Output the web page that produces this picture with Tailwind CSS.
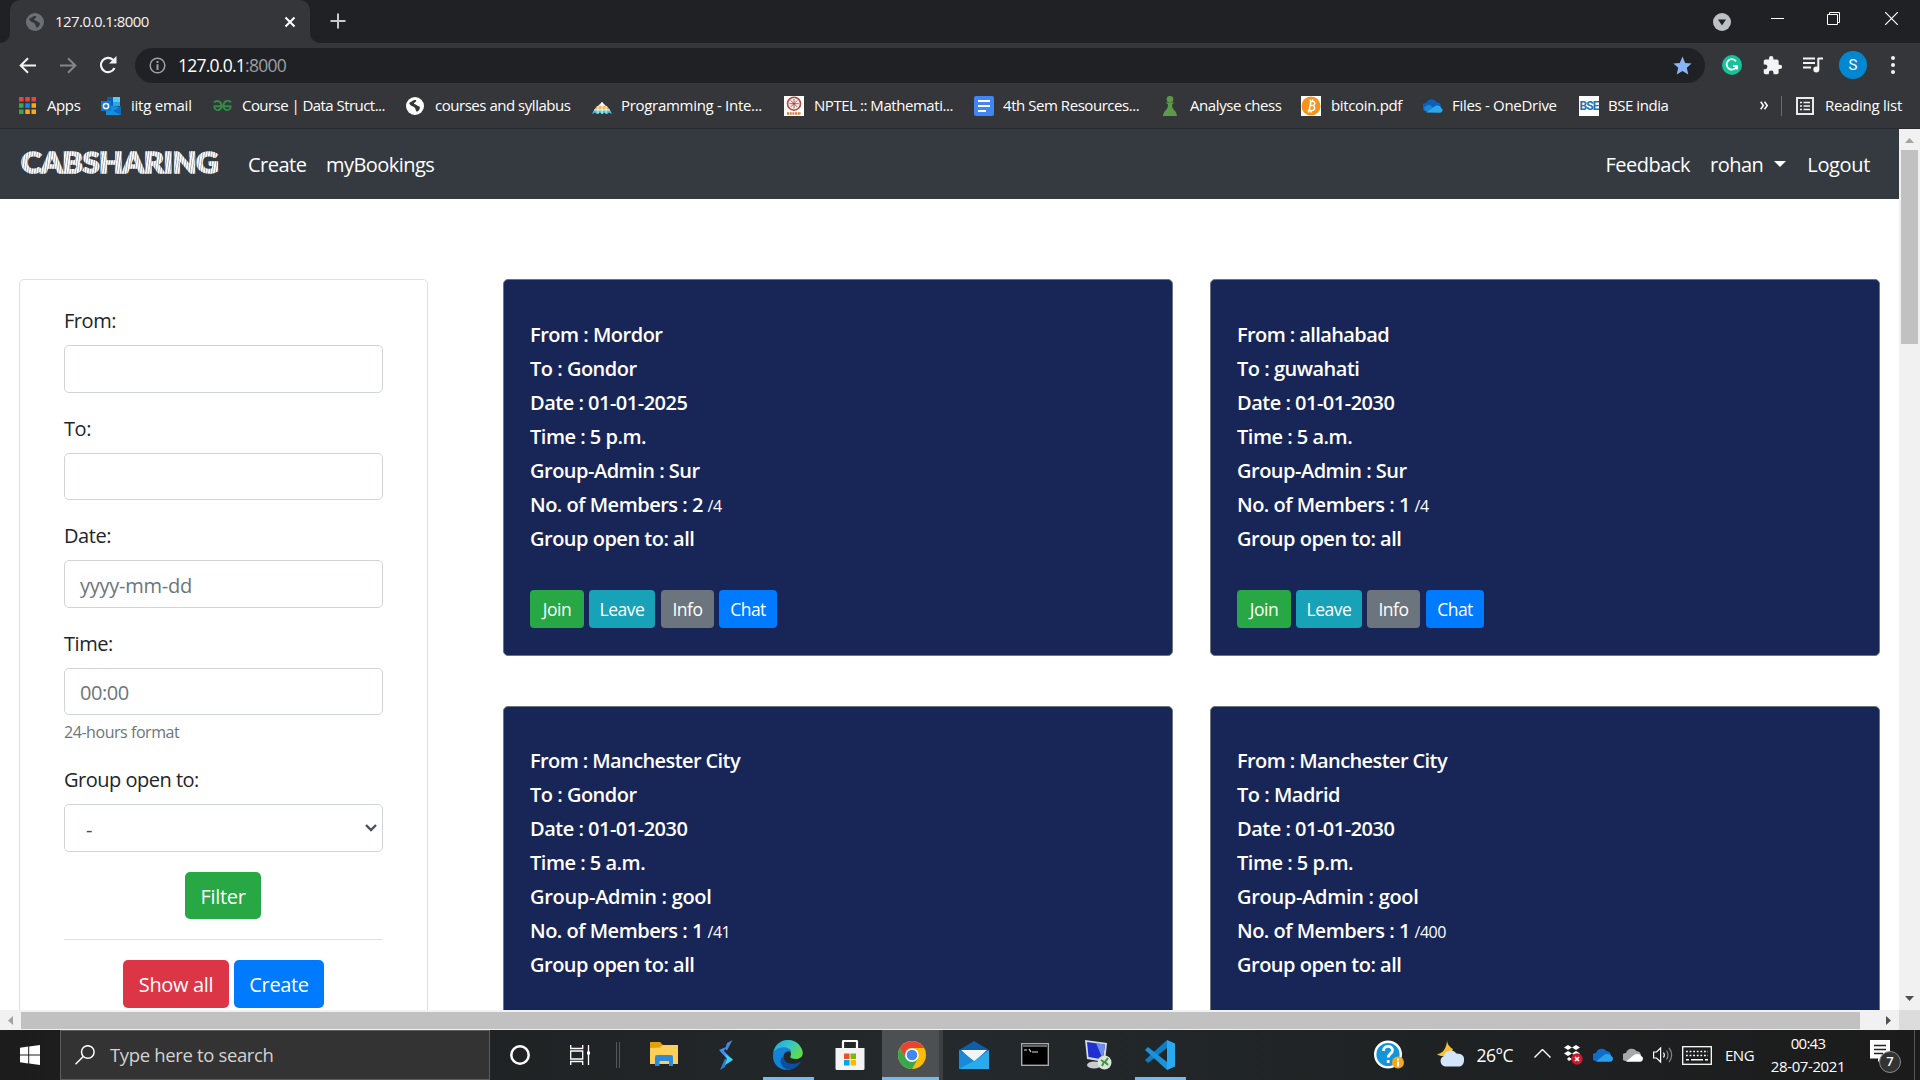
<!DOCTYPE html>
<html lang="en">
<head>
<meta charset="utf-8">
<title>127.0.0.1:8000</title>
<script src="https://cdn.jsdelivr.net/npm/@tailwindcss/browser@4"></script>
</head>
<body class="h-[1080px] w-[1920px] overflow-hidden bg-white font-['Open_Sans',sans-serif]">
<div class="flex h-[1080px] w-[1920px] flex-col">

<!-- Tab strip -->
<div class="flex h-[43px] shrink-0 bg-[#202124] text-[#f1f3f4]">
  <div class="flex h-full w-[10px] items-end bg-[#35363a]"><div class="h-full w-full rounded-br-[10px] bg-[#202124]"></div></div>
  <div class="flex h-full w-[300px] items-center rounded-t-[10px] bg-[#35363a] pl-4 pr-[12px]">
    <svg class="size-[18px]" viewBox="0 0 18 18"><circle cx="9" cy="9" r="9" fill="#6c6f73"/><path d="M3 6c3-1 3-3 7-3 1 2-2 2-2 4 2 0 2 1 4 2 3 0 2 4 0 5-2 2-2-1-3-3-1-2-4-1-6-5z" fill="#35363a"/></svg>
    <span class="ml-[11px] text-[15px] tracking-[-0.55px]">127.0.0.1:8000</span>
    <svg class="ml-auto size-4" viewBox="0 0 16 16" stroke="#fff" stroke-width="2"><path d="M3.500 3.500l9 9M12.500 3.500l-9 9"/></svg>
  </div>
  <div class="h-full w-[10px] bg-[#35363a]"><div class="h-full w-full rounded-bl-[10px] bg-[#202124]"></div></div>
  <svg class="ml-[10px] mt-[13px] size-4" viewBox="0 0 16 16" stroke="#c8c9cc" stroke-width="2"><path d="M8 .5v15M.5 8h15"/></svg>
  <div class="ml-auto flex">
    <svg class="mr-10 mt-[13px] size-[18px]" viewBox="0 0 18 18"><circle cx="9" cy="9" r="9" fill="#bdc1c6"/><path d="M5 6.500h8L9 12.500z" fill="#202124"/></svg>
    <svg class="mt-[12px] mr-[43px] h-[13px] w-[13px]" viewBox="0 0 13 13"><path d="M0 6.500h13" stroke="#fff"/></svg>
    <svg class="mr-[45px] mt-[12px] h-[13px] w-[13px]" viewBox="0 0 13 13" fill="none" stroke="#fff"><path d="M.5 2.500h10v10H.5zM2.500 2.500v-2h10v10h-2"/></svg>
    <svg class="mr-[22px] mt-[12px] h-[13px] w-[13px]" viewBox="0 0 13 13" stroke="#fff" stroke-width="1.200"><path d="M0 0l13 13M13 0L0 13"/></svg>
  </div>
</div>

<!-- Toolbar -->
<div class="flex h-[45px] shrink-0 items-center bg-[#35363a] pb-px pl-[19px] text-[#f1f3f4]">
  <svg class="size-[17px]" viewBox="0 0 17 17" fill="none" stroke="#f1f3f4" stroke-width="2"><path d="M17 8.500H2M9 1.200L1.700 8.500 9 15.800"/></svg>
  <svg class="ml-6 size-[17px]" viewBox="0 0 17 17" fill="none" stroke="#85868a" stroke-width="2"><path d="M0 8.500h15M8 1.200l7.300 7.300L8 15.800"/></svg>
  <svg class="ml-[22px] size-[18px]" viewBox="0 0 18 18"><path d="M15.500 12A7.100 7.100 0 1 1 14 3.900" fill="none" stroke="#f1f3f4" stroke-width="2.200"/><path d="M17.500 0v7.500H10z" fill="#f1f3f4"/></svg>
  <div class="ml-[18px] flex h-[35px] w-[1570px] items-center rounded-full bg-[#202124] pl-3.5 pr-[13px]">
    <svg class="size-[17px]" viewBox="0 0 17 17"><circle cx="8.500" cy="8.500" r="7.300" fill="none" stroke="#9aa0a6" stroke-width="1.500"/><path d="M8.500 4v2M8.500 7.300V13" stroke="#9aa0a6" stroke-width="2"/></svg>
    <span class="ml-3 text-[17.500px] tracking-[-0.75px] text-white">127.0.0.1<span class="text-[#9aa0a6]">:8000</span></span>
    <svg class="ml-auto size-[19px]" viewBox="0 0 24 24" fill="#8ab4f8"><path d="M12 .5l3.400 8.200 8.100.7-6.100 5.500 1.900 8.400L12 18.800l-7.300 4.500 1.900-8.400L.5 9.400l8.100-.7z"/></svg>
  </div>
  <svg class="ml-[17px] size-5" viewBox="0 0 20 20"><circle cx="10" cy="10" r="10" fill="#15c39a"/><path d="M14 6.200A5.200 5.200 0 1 0 14.800 11h-3.600M15 14.500V11" fill="none" stroke="#fff" stroke-width="1.800"/></svg>
  <svg class="ml-5 size-[21px]" viewBox="0 0 24 24" fill="#f1f3f4"><path d="M20.500 11H19V7c0-1.100-.9-2-2-2h-4V3.500a2.500 2.500 0 0 0-5 0V5H4c-1.100 0-2 .9-2 2v3.800h1.500a2.700 2.700 0 0 1 0 5.400H2V20c0 1.100.9 2 2 2h3.800v-1.500a2.700 2.700 0 0 1 5.400 0V22H17c1.100 0 2-.9 2-2v-4h1.500a2.500 2.500 0 0 0 0-5z"/></svg>
  <svg class="ml-5 h-4 w-5" viewBox="0 0 20 16"><path d="M0 1.500h12M0 6h12M0 10.500h8" stroke="#f1f3f4" stroke-width="2"/><path d="M15 1.500h5M15.300 1v11" stroke="#f1f3f4" stroke-width="2"/><circle cx="13.300" cy="12.500" r="3" fill="#f1f3f4"/></svg>
  <div class="ml-4 flex size-7 items-center justify-center rounded-full bg-[#0288d1] font-['Roboto',sans-serif] text-[15px] text-white">S</div>
  <svg class="ml-6 h-[18px] w-1" viewBox="0 0 4 18" fill="#f1f3f4"><circle cx="2" cy="2" r="2"/><circle cx="2" cy="9" r="2"/><circle cx="2" cy="16" r="2"/></svg>
</div>

<!-- Bookmarks bar -->
<div class="flex h-[41px] shrink-0 border-b border-[#292a2d] bg-[#35363a] text-[15px] text-white">
 <div class="flex h-[35px] w-full items-center whitespace-nowrap">
  <div class="flex w-[81px] items-center pl-[19px]">
    <svg class="size-[17px] shrink-0" viewBox="0 0 17 17"><path d="M0 0h4.500v4.500H0zM6.300 0h4.500v4.500H6.300zM12.500 0H17v4.500h-4.500z" fill="#e8453c"/><path d="M0 6.300h4.500v4.500H0zM0 12.500h4.500V17H0z" fill="#34a853"/><path d="M6.300 6.300h4.500v4.500H6.300z" fill="#1a84f0"/><path d="M12.500 6.300H17v4.500h-4.500zM6.300 12.500h4.500V17H6.300zM12.500 12.500H17V17h-4.500z" fill="#fbab12"/></svg>
    <span class="ml-[11px] tracking-[-0.4px]">Apps</span>
  </div>
  <div class="ml-5 flex w-[92px] items-center">
    <svg class="h-[20px] w-5 shrink-0" viewBox="0 0 20 18"><path d="M6 0h13v9H6z" fill="#28a8ea"/><path d="M6 0h6v9H6z" fill="#0a5fb4"/><path d="M12 0h7v5h-7z" fill="#50d0ff"/><path d="M5 8l15 2v8H5z" fill="#1490df"/><path d="M12 14l8-5v9z" fill="#0f6cbd"/><path d="M0 4h10v10H0z" fill="#0f78d4"/><circle cx="5" cy="9" r="2.600" fill="none" stroke="#fff" stroke-width="1.500"/></svg>
    <span class="ml-[10px] tracking-[-0.25px]">iitg email</span>
  </div>
  <div class="ml-5 flex w-[173px] items-center">
    <svg class="h-3 w-[19px] shrink-0" viewBox="0 0 19 12" fill="none" stroke="#2f8d46" stroke-width="1.900"><path d="M1 2.500C4-.5 8.500 1.500 8.500 6S3 11.500 1.500 8V6.200h16V8C16 11.500 10.500 10.500 10.500 6s4.500-7.500 7.500-3.500"/></svg>
    <span class="ml-2.5 tracking-[-0.55px]">Course | Data Struct...</span>
  </div>
  <div class="ml-5 flex w-[166px] items-center">
    <svg class="size-[18px] shrink-0" viewBox="0 0 18 18"><circle cx="9" cy="9" r="9" fill="#fff"/><path d="M3 6c3-1 3-3 7-3 1 2-2 2-2 4 2 0 2 1 4 2 3 0 2 4 0 5-2 2-2-1-3-3-1-2-4-1-6-5z" fill="#35363a"/></svg>
    <span class="ml-[11px] tracking-[-0.47px]">courses and syllabus</span>
  </div>
  <div class="ml-5 flex w-[171px] items-center">
    <svg class="mt-1 h-3 w-5 shrink-0" viewBox="0 0 20 12"><path d="M10 0l4 4H6z" fill="#e8f4f8"/><path d="M5 4h10l3 4H2z" fill="#f5b760"/><path d="M2 8h16l2 4-3-1.500-2 1.500-2-1.500-3 1.500-2-1.500-3 1.500-2-1.500L0 12z" fill="#4fc4d6"/><path d="M10 0v12M6 4v8M14 4v8M2 8h16" stroke="#fff" stroke-width=".8"/></svg>
    <span class="ml-[9px] tracking-[-0.3px]">Programming - Inte...</span>
  </div>
  <div class="ml-[21px] flex w-[170px] items-center">
    <svg class="size-5 shrink-0" viewBox="0 0 20 20"><path d="M0 0h20v20H0z" fill="#fff"/><circle cx="10" cy="7.700" r="6.500" fill="#fbeee4" stroke="#b5453c" stroke-width="1.600"/><path d="M10 3v9.500M5.300 7.700h9.500M6.700 4.400l6.600 6.600M13.300 4.400L6.700 11" stroke="#8d3a4e" stroke-width=".8"/><path d="M3 17.500h14" stroke="#d07b34" stroke-width="2.400" stroke-dasharray="2 .7"/></svg>
    <span class="ml-[10px] tracking-[-0.45px]">NPTEL :: Mathemati...</span>
  </div>
  <div class="ml-5 flex w-[166px] items-center">
    <svg class="size-5 shrink-0" viewBox="0 0 20 20"><rect width="20" height="20" rx="2" fill="#4285f4"/><path d="M4 5h12M4 10h12M4 15h8" stroke="#fff" stroke-width="2.200"/></svg>
    <span class="ml-[9px] tracking-[-0.45px]">4th Sem Resources...</span>
  </div>
  <div class="ml-[23px] flex w-[118px] items-center">
    <svg class="h-5 w-[14px] shrink-0" viewBox="0 0 14 20" fill="#5d9948"><circle cx="7" cy="3.300" r="3.300"/><path d="M2.500 6.500h9L9 8.500c0 3 1 4.500 3 6.500 1.500 1.500 2 5 2 5H0s.5-3.500 2-5c2-2 3-3.500 3-6.500z"/></svg>
    <span class="ml-[13px] tracking-[-0.42px]">Analyse chess</span>
  </div>
  <div class="ml-5 flex w-[102px] items-center">
    <svg class="size-5 shrink-0" viewBox="0 0 20 20"><path d="M0 0h20v20H0z" fill="#fff"/><circle cx="10" cy="10" r="9.500" fill="#f7931a"/><path d="M8.200 14.500l1.700-9h2c2.700.2 2.200 3.900 0 4.100H9.100h2.700c2.700.3 2.200 4.800-.7 4.900H6.700M9.500 3.500l-.4 2M11.800 3.500l-.4 2M8 14.500l-.3 2M10.300 14.500l-.3 2" fill="none" stroke="#fff" stroke-width="1.500"/></svg>
    <span class="ml-[10px] tracking-[-0.35px]">bitcoin.pdf</span>
  </div>
  <div class="ml-5 flex w-[135px] items-center">
    <svg class="h-[14px] w-5 shrink-0" viewBox="0 0 20 14"><path d="M3 12a4 4 0 0 1 0-8A6 6 0 0 1 13.500 3 5 5 0 0 1 18 7.500L8 13z" fill="#0f5fb8"/><path d="M8 13L3 12.500C0 11 1 7 4 6.500c2-1 4 0 5 1l3 3z" fill="#1686d9"/><path d="M3 13.500L11 8c3-3 7-1 7 1 2 .5 2.500 4.500-1 4.800z" fill="#2aa8ee"/></svg>
    <span class="ml-[9px] tracking-[-0.3px]">Files - OneDrive</span>
  </div>
  <div class="ml-[21px] flex items-center">
    <div class="flex size-5 shrink-0 items-center justify-center overflow-hidden bg-white font-['Roboto',sans-serif] text-[12px] font-bold tracking-[-1px] text-[#1d74b8]">BSE</div>
    <span class="ml-[9px] tracking-[-0.45px]">BSE india</span>
  </div>
  <div class="ml-auto flex items-center">
    <svg class="h-[9px] w-2" viewBox="0 0 8 9" fill="none" stroke="#fff" stroke-width="1.500"><path d="M.7.7l2.700 3.800L.7 8.300M4.500.7l2.700 3.800-2.700 3.800"/></svg>
    <div class="ml-[13px] h-5 w-px bg-[#6b6c70]"></div>
    <svg class="ml-[14px] size-[18px]" viewBox="0 0 18 18" fill="none" stroke="#f1f3f4"><rect x="1" y="1" width="16" height="16" stroke-width="1.900"/><path d="M4 5.500h2M4 9h2M4 12.500h2M7.500 5.500H14M7.500 9H14M7.500 12.500H14" stroke-width="1.500"/></svg>
    <span class="ml-[11px] mr-[18px] tracking-[-0.27px]">Reading list</span>
  </div>
 </div>
</div>

<!-- Viewport -->
<div class="flex h-[881px] shrink-0">
<main class="flex h-full w-[1899px] flex-col overflow-hidden">
  <nav class="flex h-[70px] shrink-0 items-center bg-[#343a40] px-5 pt-0.5 text-[20px] tracking-[-0.5px] text-white">
    <svg class="mb-1 h-[34px] w-[228px]" viewBox="0 0 228 34">
      <defs><pattern id="inline" width="2.500" height="2.500" patternUnits="userSpaceOnUse" patternTransform="rotate(8)"><path d="M0 0h2.500v2.500H0z" fill="#a3a8ae"/><path d="M0 0h1.600v2.500H0z" fill="#fff"/></pattern></defs>
      <text x="1" y="27" font-family="Lato, sans-serif" font-weight="900" font-size="28" textLength="197" lengthAdjust="spacingAndGlyphs" fill="url(#inline)" stroke="url(#inline)" stroke-width="1.600">CABSHARING</text>
    </svg>
    <a class="w-[78px]">Create</a>
    <a class="tracking-[-0.55px]">myBookings</a>
    <a class="ml-auto">Feedback</a>
    <a class="ml-5 flex items-center">rohan
      <svg class="mb-0.5 ml-[11px] h-[6px] w-3" viewBox="0 0 12 6"><path d="M0 0h12L6 6z" fill="#fff"/></svg></a>
    <a class="ml-[21px] mr-[9px] tracking-[-0.35px]">Logout</a>
  </nav>
  <div class="flex min-h-0 flex-1 pl-[19px] pt-20">
    <aside class="h-[800px] w-[409px] shrink-0 rounded-[5px] border border-[#dfdfdf] px-11 pt-[25px] text-[20px] tracking-[-0.45px] text-[#212529]">
      <div class="mb-5"><label class="mb-2.5 block h-[30px] leading-8">From:</label><div class="h-[47.5px] rounded-[5px] border border-[#ced4da]"></div></div>
      <div class="mb-5"><label class="mb-2.5 block h-[30px] leading-8">To:</label><div class="h-[47.5px] rounded-[5px] border border-[#ced4da]"></div></div>
      <div class="mb-5"><label class="mb-2.5 block h-[30px] leading-8">Date:</label><div class="flex h-[47.5px] items-center rounded-[5px] border border-[#ced4da] px-[15px] pt-1 tracking-[-0.25px] text-[#6c757d]">yyyy-mm-dd</div></div>
      <div class="mb-5"><label class="mb-2.5 block h-[30px] leading-8">Time:</label><div class="flex h-[47.5px] items-center rounded-[5px] border border-[#ced4da] px-[15px] pt-1 text-[#6c757d]">00:00</div>
      <small class="mt-[5px] block h-[24px] text-[16px] leading-[25px] text-[#6c757d]">24-hours format</small></div>
      <div><label class="mb-2.5 block h-[30px] leading-8 tracking-[-0.5px]">Group open to:</label>
        <div class="flex h-[47.5px] items-center justify-between rounded-[5px] border border-[#ced4da] pl-[21px] pr-[5px] text-[#495057]"><span class="pt-1">-</span><svg class="h-2 w-3" viewBox="0 0 12 8" fill="none" stroke="#495057" stroke-width="2.400"><path d="M1 1l5 5 5-5"/></svg></div></div>
      <div class="mt-5 flex justify-center"><div class="mr-px flex h-[47.5px] w-[76px] items-center justify-center rounded-[5px] bg-[#28a745] pt-[3px] tracking-[-0.3px] text-white">Filter</div></div>
      <div class="my-5 h-px bg-[#e0e0e0]"></div>
      <div class="flex justify-center gap-[5px] tracking-[-0.35px] text-white"><div class="flex h-[47.5px] w-[106px] items-center justify-center rounded-[5px] bg-[#dc3545] pt-0.5">Show all</div><div class="flex h-[47.5px] w-[90px] items-center justify-center rounded-[5px] bg-[#007bff] pt-0.5">Create</div></div>
    </aside>

    <section class="ml-[75px] grid h-[803px] grid-cols-[670px_670px] grid-rows-[377px_377px] gap-x-[37px] gap-y-[49.5px] text-[20px] font-semibold leading-[34px] tracking-[-0.5px] text-white">
      <article class="rounded-[5px] border border-[#6c757d] bg-[#182657] pl-[26px] pt-[38px]">
        <p>From : Mordor</p><p>To : Gondor</p><p>Date : 01-01-2025</p><p>Time : 5 p.m.</p><p>Group-Admin : Sur</p><p>No. of Members : 2 <small class="text-[16px] font-normal leading-none">/4</small></p><p>Group open to: all</p>
        <div class="mt-[34px] flex gap-[5px] text-[17.5px] font-normal leading-[38px]"><span class="w-[54px] rounded bg-[#28a745] text-center">Join</span><span class="w-[66px] rounded bg-[#17a2b8] text-center">Leave</span><span class="ml-px w-[53px] rounded bg-[#6c757d] text-center">Info</span><span class="w-[58px] rounded bg-[#007bff] text-center">Chat</span></div>
      </article>
      <article class="rounded-[5px] border border-[#6c757d] bg-[#182657] pl-[26px] pt-[38px]">
        <p class="tracking-[-0.6px]">From : allahabad</p><p>To : guwahati</p><p>Date : 01-01-2030</p><p>Time : 5 a.m.</p><p>Group-Admin : Sur</p><p>No. of Members : 1 <small class="text-[16px] font-normal leading-none">/4</small></p><p>Group open to: all</p>
        <div class="mt-[34px] flex gap-[5px] text-[17.5px] font-normal leading-[38px]"><span class="w-[54px] rounded bg-[#28a745] text-center">Join</span><span class="w-[66px] rounded bg-[#17a2b8] text-center">Leave</span><span class="w-[53px] rounded bg-[#6c757d] text-center">Info</span><span class="ml-px w-[58px] rounded bg-[#007bff] text-center">Chat</span></div>
      </article>
      <article class="rounded-[5px] border border-[#6c757d] bg-[#182657] pl-[26px] pt-[37.5px]">
        <p class="tracking-[-0.6px]">From : Manchester City</p><p>To : Gondor</p><p>Date : 01-01-2030</p><p>Time : 5 a.m.</p><p class="tracking-[-0.3px]">Group-Admin : gool</p><p>No. of Members : 1 <small class="text-[16px] font-normal leading-none">/41</small></p><p>Group open to: all</p>
      </article>
      <article class="rounded-[5px] border border-[#6c757d] bg-[#182657] pl-[26px] pt-[37.5px]">
        <p class="tracking-[-0.6px]">From : Manchester City</p><p>To : Madrid</p><p>Date : 01-01-2030</p><p>Time : 5 p.m.</p><p class="tracking-[-0.3px]">Group-Admin : gool</p><p>No. of Members : 1 <small class="text-[16px] font-normal leading-none">/400</small></p><p>Group open to: all</p>
      </article>
    </section>
  </div>
</main>
<div class="flex w-[21px] flex-col items-center bg-[#f1f1f1]">
  <svg class="mt-[9px] h-[5px] w-[9px]" viewBox="0 0 9 5"><path d="M0 5h9L4.500 0z" fill="#a3a3a3"/></svg>
  <div class="mt-[7px] h-[194px] w-[17px] bg-[#c1c1c1]"></div>
  <svg class="mb-[9px] mt-auto h-[5px] w-[9px]" viewBox="0 0 9 5"><path d="M0 0h9L4.500 5z" fill="#505050"/></svg>
</div>
</div>
<div class="flex h-5 shrink-0 items-center bg-[#f1f1f1]">
  <svg class="ml-2 h-[9px] w-[5px]" viewBox="0 0 5 9"><path d="M5 0v9L0 4.500z" fill="#a3a3a3"/></svg>
  <div class="ml-2 h-[17px] w-[1839px] bg-[#c1c1c1]"></div>
  <svg class="ml-[26px] h-[9px] w-[5px]" viewBox="0 0 5 9"><path d="M0 0v9l5-4.500z" fill="#505050"/></svg>
  <div class="ml-auto h-5 w-[21px] bg-[#dcdcdc]"></div>
</div>

<!-- Taskbar -->
<div class="flex h-[50px] shrink-0 bg-linear-to-r from-[#1c1c1c] via-[#23292c] to-[#1b1b1b] text-white">
  <div class="flex w-[60px] items-center justify-center"><svg class="size-5" viewBox="0 0 20 20" fill="#fff"><path d="M0 2.800L8.200 1.600v7.900H0zM9.200 1.500L20 0v9.500H9.200zM0 10.500h8.200v7.900L0 17.200zM9.200 10.500H20V20L9.200 18.500z"/></svg></div>
  <div class="flex w-[430px] items-center border border-[#5c5c5c] bg-[#333] pl-[14px]">
    <svg class="size-5" viewBox="0 0 20 20" fill="none" stroke="#fff" stroke-width="1.500"><circle cx="12.800" cy="7" r="6.300"/><path d="M8.300 11.500L.5 19.300"/></svg>
    <span class="ml-[15px] text-[18.5px] tracking-[-0.35px] text-[#d2d2d2]">Type here to search</span>
  </div>
  <div class="flex w-[60px] items-center justify-center"><svg class="size-5" viewBox="0 0 20 20"><circle cx="10" cy="10" r="8.700" fill="none" stroke="#fff" stroke-width="2.500"/></svg></div>
  <div class="flex w-[60px] items-center justify-center"><svg class="h-5 w-[21px]" viewBox="0 0 21 20" fill="none" stroke="#fff" stroke-width="1.300"><path d="M.7 0v3.500h12V0M.7 20v-3.500h12V20M.7 6h12v8h-12zM18.500 0v20"/><path d="M17 6.500h3v3h-3z" fill="#fff" stroke="none"/></svg></div>
  <div class="flex w-[20px] items-center gap-[2px] pl-1.5"><div class="h-[26px] w-px bg-[#55585a]"></div><div class="h-[26px] w-px bg-[#55585a]"></div></div>
  <div class="ml-0.5 flex w-[63px] items-center justify-center"><svg class="mb-0.5 h-[24px] w-[28px]" viewBox="0 0 28 24"><path d="M0 0h10l3 3h15v4H0z" fill="#e3a008"/><path d="M0 6l10-.5 3-2.500h15v19H0z" fill="#fccf58"/><path d="M5 24v-9q0-2 2-2h14q2 0 2 2v9h-4v-5H9.500v5z" fill="#2f8bd8"/></svg></div>
  <div class="flex w-[62px] items-center justify-center"><svg class="h-[30px] w-4" viewBox="0 0 16 30"><path d="M14.500 0L9 3 7 9l2 1.500z" fill="#4a86d8"/><path d="M2 30l5-3 2-7-2-1.500z" fill="#2f7fd0"/><path d="M1 10l7-3-2 4 9 9-8 5 2-6z" fill="#3f8ff2"/><path d="M7 14l8 5.500L7 25l2-6z" fill="#38d6f6"/></svg></div>
  <div class="flex w-[62px] flex-col items-center"><svg class="mb-[7px] mt-[10px] size-[30px] shrink-0" viewBox="0 0 30 30"><defs><linearGradient id="edge" x1="0" y1="0" x2="1" y2=".6"><stop offset="0" stop-color="#1f9fe0"/><stop offset=".5" stop-color="#35c4c8"/><stop offset="1" stop-color="#5fdc4c"/></linearGradient></defs><path d="M.3 13C2-3 25-5 29.500 11c1.500 7-5 9-10.500 7.500-3-1-1-2-1-4.500 0-5-7-8-17.700-1z" fill="url(#edge)"/><path d="M.3 13C3 6 17 5 18.500 12c-3-2-8 0-8 5 0 6 5 10 10 11.500C10 33-2 26 .3 13z" fill="#1383d8"/><path d="M10.500 16c0 8 10 10 17.500 5.500-4 8-13 10-18 5.500-4-4-2.500-9 .5-11z" fill="#0c4f9c"/></svg><div class="h-[3px] w-[51px] bg-[#76b9ed]"></div></div>
  <div class="flex w-[61px] items-center justify-center"><svg class="size-[30px]" viewBox="0 0 30 30"><path d="M8 9V2q0-1.200 1.200-1.200h11.600Q22 .8 22 2v7" fill="none" stroke="#fff" stroke-width="2.200"/><path d="M.5 8h29v20.500q0 1.500-1.500 1.500H2Q.5 30 .5 28.500z" fill="#f3f3f3"/><path d="M9 13.500h5.500V19H9z" fill="#f25022"/><path d="M15.500 13.500H21V19h-5.500z" fill="#7fba00"/><path d="M9 20h5.500v5.500H9z" fill="#00a4ef"/><path d="M15.500 20H21v5.500h-5.500z" fill="#ffb900"/></svg></div>
  <div class="ml-0.5 flex w-[61px] flex-col items-center border-r-4 border-[#3b3f42] bg-[#4d5053]"><svg class="mb-[8px] ml-0.5 mt-[11px] size-[28px] shrink-0" viewBox="0 0 28 28"><circle cx="14" cy="14" r="14" fill="#fbbc05"/><path d="M1.900 7A14 14 0 0 1 26.100 7H14a7 7 0 0 0-6.100 10.500z" fill="#ea4335"/><path d="M1.900 7A14 14 0 0 0 14 28l6.100-10.500a7 7 0 0 1-12.200 0z" fill="#34a853"/><circle cx="14" cy="14" r="6.800" fill="#fff"/><circle cx="14" cy="14" r="5.300" fill="#4285f4"/></svg><div class="h-[3px] w-[57px] bg-[#76b9ed]"></div></div>
  <div class="flex w-[61px] items-center justify-center"><svg class="size-[30px]" viewBox="0 0 30 28"><path d="M0 9L15 0l15 9v5H0z" fill="#0f5ea8"/><path d="M2 9h26L15 21z" fill="#f4f4f4"/><path d="M0 9l15 11L30 9v19H0z" fill="#2ba9ea"/><path d="M0 28V9l15 11z" fill="#1b8ad6"/></svg></div>
  <div class="flex w-[62px] items-center justify-center pb-0.5"><svg class="h-[23px] w-[28px]" viewBox="0 0 28 23"><rect x=".7" y=".7" width="26.600" height="21.600" fill="#000" stroke="#aaa" stroke-width="1.400"/><path d="M2 3h24" stroke="#666" stroke-width="2"/><path d="M3 7h3M8 6l2 3M11 9h6" stroke="#ddd" stroke-width="1.200"/></svg></div>
  <div class="flex w-[63px] items-center justify-center"><svg class="size-[30px]" viewBox="0 0 30 30"><path d="M2 0l22 3-2 19L4 19z" fill="#d9dde2"/><path d="M4 2l18 2.500-2 15L5.500 17z" fill="#2030d0"/><path d="M13 3.300l9 1.200-2 15z" fill="#6d8df0"/><ellipse cx="11" cy="25" rx="7" ry="3.500" fill="#c8ccd0"/><circle cx="21.500" cy="22.500" r="7" fill="#dde3dd"/><path d="M18 20l3 2-2 4M25 18l-3 4 3 3" fill="none" stroke="#3a9a38" stroke-width="2"/></svg></div>
  <div class="flex w-[62px] flex-col items-center"><svg class="mb-[7px] mt-[10px] size-[30px] shrink-0" viewBox="0 0 30 30"><path d="M22 0l8 3.500v23L22 30z" fill="#29a9f2"/><path d="M0 20L22 0v8L3 23z" fill="#0f7cc4"/><path d="M0 10l3-3 19 15v8z" fill="#1c92da"/></svg><div class="h-[3px] w-[51px] bg-[#76b9ed]"></div></div>

  <div class="ml-auto flex items-center">
    <svg class="mr-[33px] size-[30px]" viewBox="0 0 30 30"><circle cx="14" cy="14.500" r="12.800" fill="#1296db" stroke="#fff" stroke-width="2.400"/><path d="M9.500 11c0-6 9-6 9-.8 0 3.400-4.300 3.400-4.300 7.300M14.200 20v3" fill="none" stroke="#fff" stroke-width="2.800"/><circle cx="24" cy="22.500" r="6" fill="#f5a81c"/><path d="M24 18.500v2M24 21.500v5" stroke="#fff" stroke-width="2"/></svg>
    <svg class="mb-1 h-[27px] w-[28px]" viewBox="0 0 28 27"><path d="M10 0c0 3 2 7 6 9-2 7-12 9-16 5 6 0 10-7 10-14z" fill="#fbc02d"/><path d="M8 26.500a5.500 5.500 0 0 1-1-10.500 7 7 0 0 1 12.500-2.500c6 0 8 3 7.500 6.500 0 4-2 6.500-5 6.500z" fill="#d3e5f8"/></svg>
    <span class="ml-[11px] text-[17.5px] tracking-[-0.5px]">26°C</span>
    <svg class="ml-[21px] mb-1 h-[9px] w-[17px]" viewBox="0 0 17 9" fill="none" stroke="#fff" stroke-width="1.400"><path d="M.5 8.500l8-8 8 8"/></svg>
    <svg class="ml-3 h-5 w-5" viewBox="0 0 20 20"><path d="M5 0l4 2.500L5 5 1 2.500zM13 0l4 2.500L13 5 9 2.500zM5 6l4 2.500L5 11 1 8.500zM13 6l4 2.500L13 11 9 8.500zM6 12l3 2-3 2-2-2z" fill="#fff"/><circle cx="14" cy="14" r="5.700" fill="#d4162a"/><path d="M12 12l4 4M16 12l-4 4" stroke="#fff" stroke-width="1.700"/></svg>
    <svg class="ml-2.5 h-[14px] w-5" viewBox="0 0 20 14"><path d="M3 13a4 4 0 0 1 0-8A6 6 0 0 1 13.500 3 5 5 0 0 1 18 7.500L8 13z" fill="#0f6cc8"/><path d="M3 13.500L11 7c3-2 7-1 7 1 3 1 2.500 5.500-1 5.800H4z" fill="#2aa1ea"/></svg>
    <svg class="ml-2.5 h-[14px] w-5" viewBox="0 0 20 14"><path d="M3 13a4 4 0 0 1 0-8A6 6 0 0 1 13.500 3 5 5 0 0 1 18 7.500L8 13z" fill="#a8a8a8"/><path d="M3 13.500L11 7c3-2 7-1 7 1 3 1 2.500 5.500-1 5.800H4z" fill="#fff"/></svg>
    <svg class="ml-2.5 h-[18px] w-5" viewBox="0 0 20 18" fill="none" stroke="#fff" stroke-width="1.200"><path d="M.6 6h3l4-4v14l-4-4h-3zM10.500 6.500c1 1.500 1 3.500 0 5"/><path d="M13.500 4.500c2 3 2 6 0 9M16 2c3.500 4 3.500 10 0 14" stroke="#888"/></svg>
    <svg class="ml-[9px] h-[19px] w-[30px]" viewBox="0 0 30 19" fill="none" stroke="#fff"><rect x=".7" y=".7" width="28.600" height="17.600" stroke-width="1.300"/><path d="M4 5.500h22M4 9.500h22" stroke-width="1.600" stroke-dasharray="1.800 1.800"/><path d="M4 13.700h3M9 13.700h12M23 13.700h3" stroke-width="1.500"/></svg>
    <span class="ml-[13px] w-[31px] text-[15px] tracking-[-0.5px]">ENG</span>
    <div class="ml-[13px] w-[78px] text-center text-[15px] leading-[23px] tracking-[-0.4px]"><div class="tracking-[-0.7px]">00:43</div><div>28-07-2021</div></div>
    <div class="relative ml-[23px] mt-1 h-[34px] w-[32px]"><svg class="h-[22px] w-[21px]" viewBox="0 0 21 22"><path d="M0 0h20v18.500h-8L8 22v-3.500H0z" fill="#fff"/><path d="M4 5.500h12M4 9.500h12M4 13.500h9" stroke="#222" stroke-width="1.400"/></svg><div class="absolute left-[9px] top-[11px] flex size-[22px] items-center justify-center rounded-full border-[1.5px] border-[#8a8a8a] bg-[#333] text-[13px] font-semibold">7</div></div>
    <div class="ml-3 mr-[5px] h-[50px] w-px bg-[#555]"></div>
  </div>
</div>
</div>
</body>
</html>
